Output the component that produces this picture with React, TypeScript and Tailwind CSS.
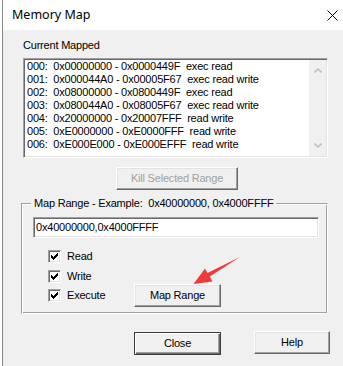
import React from "react";

const rows = [
  "000:  0x00000000 - 0x0000449F  exec read",
  "001:  0x000044A0 - 0x00005F67  exec read write",
  "002:  0x08000000 - 0x0800449F  exec read",
  "003:  0x080044A0 - 0x08005F67  exec read write",
  "004:  0x20000000 - 0x20007FFF  read write",
  "005:  0xE0000000 - 0xE0000FFF  read write",
  "006:  0xE000E000 - 0xE000EFFF  read write",
];

const checkPixels: [number, number][] = [
  [6, 0],
  [5, 1], [6, 1],
  [0, 2], [4, 2], [5, 2], [6, 2],
  [0, 3], [1, 3], [3, 3], [4, 3], [5, 3],
  [0, 4], [1, 4], [2, 4], [3, 4], [4, 4],
  [1, 5], [2, 5], [3, 5],
  [2, 6],
];

function CheckBox() {
  return (
    <div className="w-[13px] h-[13px] shrink-0 bg-white border border-t-[#a0a0a0] border-l-[#a0a0a0] border-b-white border-r-white shadow-[inset_1px_1px_0_#696969,inset_-1px_-1px_0_#e3e3e3] flex items-center justify-center">
      <svg width="7" height="7" viewBox="0 0 7 7" shapeRendering="crispEdges">
        {checkPixels.map(([x, y], i) => (
          <rect key={i} x={x} y={y} width="1" height="1" fill="#000" />
        ))}
      </svg>
    </div>
  );
}

function Button({
  children,
  className = "",
  disabled = false,
  isDefault = false,
}: {
  children: React.ReactNode;
  className?: string;
  disabled?: boolean;
  isDefault?: boolean;
}) {
  const frame = isDefault
    ? "border border-[#3c3c3c] shadow-[inset_1px_1px_0_#ffffff,inset_-1px_-1px_0_#696969,inset_-2px_-2px_0_#a0a0a0]"
    : "border border-t-white border-l-white border-r-[#696969] border-b-[#696969] shadow-[inset_-1px_-1px_0_#a0a0a0,inset_1px_1px_0_#e3e3e3]";
  return (
    <div
      className={`h-[23px] bg-[#f0f0f0] flex items-center justify-center ${frame} ${
        disabled ? "text-[#a0a0a0]" : "text-black"
      } ${className}`}
    >
      {children}
    </div>
  );
}

export default function App() {
  return (
    <div className="relative w-[343px] h-[366px] bg-white flex font-['Liberation_Sans',Arial,sans-serif] text-[11px] tracking-[-0.2px] text-black overflow-hidden">
      <div className="ml-[2px] border-l border-[#8a8a8a] flex-1 flex flex-col">
        {/* Title bar */}
        <div className="h-[30px] bg-white flex items-center justify-between pl-[9px] pr-[5px]">
          <span className="font-['Noto_Sans',sans-serif] text-[12.5px] tracking-normal text-black">
            Memory Map
          </span>
          <svg width="11" height="11" viewBox="0 0 11 11">
            <line x1="0.5" y1="0.5" x2="10.5" y2="10.5" stroke="#000" strokeWidth="1" />
            <line x1="10.5" y1="0.5" x2="0.5" y2="10.5" stroke="#000" strokeWidth="1" />
          </svg>
        </div>

        {/* Body */}
        <div className="flex-1 bg-[#f0f0f0] flex flex-col">
          <div className="ml-[20px] mt-[9px] h-[13px] leading-[13px]">Current Mapped</div>

          {/* List box */}
          <div className="ml-[20px] mt-[6px] w-[305px] h-[100px] bg-white border border-t-[#a0a0a0] border-l-[#a0a0a0] border-b-white border-r-white shadow-[inset_1px_1px_0_#696969,inset_-1px_-1px_0_#e3e3e3] flex">
            <div className="flex-1 pt-[1px] pl-[3px] flex flex-col">
              {rows.map((r) => (
                <div key={r} className="h-[13px] leading-[13px] whitespace-pre">
                  {r}
                </div>
              ))}
            </div>
            <div className="w-[17px] my-[1px] mr-[1px] bg-[#f0f0f0] flex flex-col items-center justify-between py-[8px]">
              <svg width="8" height="5" viewBox="0 0 8 5">
                <polyline points="0.5,4.5 4,1 7.5,4.5" fill="none" stroke="#bfbfbf" strokeWidth="1.6" />
              </svg>
              <svg width="8" height="5" viewBox="0 0 8 5">
                <polyline points="0.5,0.5 4,4 7.5,0.5" fill="none" stroke="#bfbfbf" strokeWidth="1.6" />
              </svg>
            </div>
          </div>

          {/* Kill button */}
          <Button className="ml-[113px] mt-[9px] w-[122px]" disabled>
            Kill Selected Range
          </Button>

          {/* Group box */}
          <div className="relative ml-[18px] mt-[13px] w-[307px] h-[111px] border border-t-[#a0a0a0] border-l-[#a0a0a0] border-b-white border-r-white shadow-[inset_1px_1px_0_#ffffff,inset_-1px_-1px_0_#a0a0a0] flex flex-col">
            <div className="absolute left-[9px] -top-[7px] px-[3px] h-[13px] leading-[13px] bg-[#f0f0f0] whitespace-pre">
              Map Range - Example:  0x40000000, 0x4000FFFF
            </div>

            <div className="ml-[11px] mt-[13px] w-[286px] h-[21px] bg-white border border-t-[#a0a0a0] border-l-[#a0a0a0] border-b-white border-r-white shadow-[inset_1px_1px_0_#696969,inset_-1px_-1px_0_#e3e3e3] flex items-center pl-[2px]">
              0x40000000,0x4000FFFF
            </div>

            <div className="ml-[26px] mt-[12px] flex flex-col">
              <div className="h-[13px] flex items-center gap-[6px]">
                <CheckBox />
                <span className="leading-[13px]">Read</span>
              </div>
              <div className="mt-[7px] h-[13px] flex items-center gap-[6px]">
                <CheckBox />
                <span className="leading-[13px]">Write</span>
              </div>
              <div className="mt-[1px] h-[23px] flex items-center">
                <div className="w-[86px] flex items-center gap-[6px]">
                  <CheckBox />
                  <span className="leading-[13px]">Execute</span>
                </div>
                <Button className="w-[87px]">Map Range</Button>
              </div>
            </div>
          </div>

          {/* Bottom buttons */}
          <div className="mt-[18px] flex items-start">
            <Button className="ml-[131px] w-[87px]" isDefault>
              Close
            </Button>
            <Button className="ml-[33px] -mt-px w-[76px]">Help</Button>
          </div>
        </div>
      </div>

      {/* Red annotation arrow */}
      <svg
        className="absolute left-0 top-0 pointer-events-none"
        width="343"
        height="366"
        viewBox="0 0 343 366"
      >
        <polygon
          points="193.5,284 212.5,281.5 209.8,276.6 240,257 207.4,273 205,268.6"
          fill="#ef3a3a"
        />
      </svg>
    </div>
  );
}
